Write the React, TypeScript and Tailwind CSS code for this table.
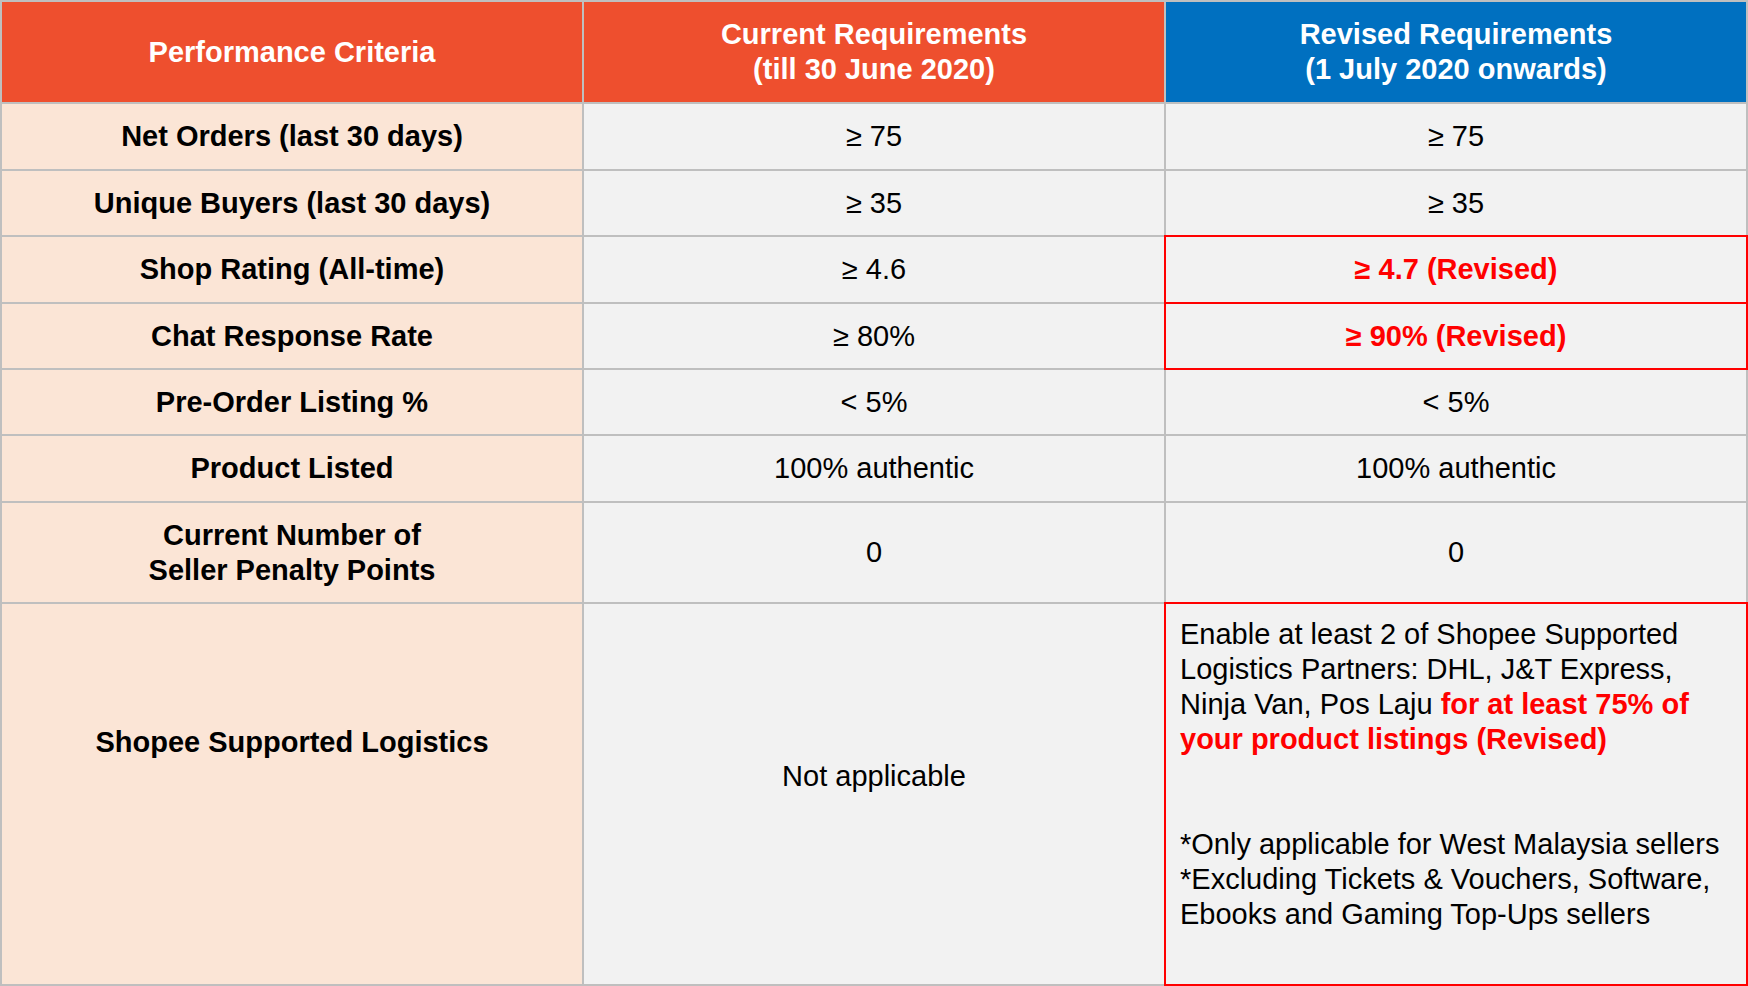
const font = { fontFamily: '"Liberation Sans", Arial, Helvetica, sans-serif' };

type Row = {
  label: React.ReactNode;
  current: React.ReactNode;
  revised: React.ReactNode;
  revisedFlag?: boolean;
  h: string;
};

const rows: Row[] = [
  { label: "Net Orders (last 30 days)", current: "≥ 75", revised: "≥ 75", h: "h-[65px]" },
  { label: "Unique Buyers (last 30 days)", current: "≥ 35", revised: "≥ 35", h: "h-[64px]" },
  { label: "Shop Rating (All-time)", current: "≥ 4.6", revised: "≥ 4.7 (Revised)", revisedFlag: true, h: "h-[65px]" },
  { label: "Chat Response Rate", current: "≥ 80%", revised: "≥ 90% (Revised)", revisedFlag: true, h: "h-[64px]" },
  { label: "Pre-Order Listing %", current: "< 5%", revised: "< 5%", h: "h-[64px]" },
  { label: "Product Listed", current: "100% authentic", revised: "100% authentic", h: "h-[65px]" },
  {
    label: (
      <>
        Current Number of
        <br />
        Seller Penalty Points
      </>
    ),
    current: "0",
    revised: "0",
    h: "h-[99px]",
  },
];

export default function App() {
  return (
    <div className="w-[1748px] h-[986px] bg-white overflow-hidden" style={font}>
      <div className="grid grid-cols-[580px_580px_580px] gap-[2px] bg-[#bfbfbf] p-[2px] text-[29px] leading-[35px] text-black">
        {/* Header */}
        <div className="h-[100px] bg-[#ee4f2e] text-white font-bold flex items-center justify-center text-center">
          Performance Criteria
        </div>
        <div className="h-[100px] bg-[#ee4f2e] text-white font-bold flex items-center justify-center text-center">
          Current Requirements
          <br />
          (till 30 June 2020)
        </div>
        <div className="h-[100px] bg-[#0070c0] text-white font-bold flex items-center justify-center text-center">
          Revised Requirements
          <br />
          (1 July 2020 onwards)
        </div>

        {rows.map((r, i) => (
          <div key={i} className="contents">
            <div className={`${r.h} bg-[#fbe5d6] font-bold flex items-center justify-center text-center`}>
              <div>{r.label}</div>
            </div>
            <div className={`${r.h} bg-[#f2f2f2] flex items-center justify-center text-center`}>
              {r.current}
            </div>
            {r.revisedFlag ? (
              <div
                className={`${r.h} relative z-10 bg-[#f2f2f2] flex items-center justify-center text-center font-bold text-[#ff0000] outline-2 outline-[#ff0000]`}
              >
                {r.revised}
              </div>
            ) : (
              <div className={`${r.h} bg-[#f2f2f2] flex items-center justify-center text-center`}>
                {r.revised}
              </div>
            )}
          </div>
        ))}

        {/* Logistics row */}
        <div className="h-[380px] bg-[#fbe5d6] font-bold flex justify-center text-center pt-[121px]">
          Shopee Supported Logistics
        </div>
        <div className="h-[380px] bg-[#f2f2f2] flex justify-center text-center pt-[155px]">
          Not applicable
        </div>
        <div className="h-[380px] relative z-10 bg-[#f2f2f2] outline-2 outline-[#ff0000] pl-[14px] pr-2 pt-[13px]">
          <p>Enable at least 2 of Shopee Supported</p>
          <p>Logistics Partners: DHL, J&amp;T Express,</p>
          <p>
            Ninja Van, Pos Laju <span className="font-bold text-[#ff0000]">for at least 75% of</span>
          </p>
          <p className="font-bold text-[#ff0000]">your product listings (Revised)</p>
          <p className="mt-[70px]">*Only applicable for West Malaysia sellers</p>
          <p>*Excluding Tickets &amp; Vouchers, Software,</p>
          <p>Ebooks and Gaming Top-Ups sellers</p>
        </div>
      </div>
    </div>
  );
}
